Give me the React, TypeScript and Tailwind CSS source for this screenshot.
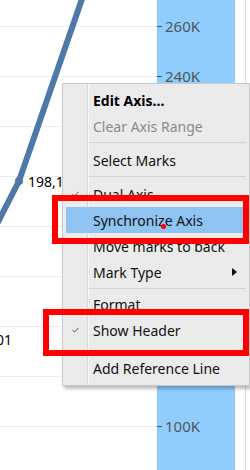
import React from 'react';

const axisTicks = ['260K', '240K', '220K', '200K', '180K', '160K', '140K', '120K', '100K'];

type Item = { label: string; kind?: 'bold' | 'disabled'; checked?: boolean; sub?: boolean; active?: boolean };

function Row({ item }: { item: Item }) {
  return (
    <div
      className={`relative flex h-[26px] items-center pl-[30px] pr-3 text-[14px] ${
        item.kind === 'bold' ? 'font-bold text-black' : item.kind === 'disabled' ? 'text-[#8a8a8a]' : 'text-[#111]'
      }`}
    >
      {item.active ? <div className="absolute inset-y-0 left-[3px] right-[3px] bg-[#8fc3f1]" /> : null}
      {item.checked ? (
        <svg className="absolute left-[9px] top-[10px]" width="7" height="6" viewBox="0 0 7 6">
          <path d="M0.5 3 L2.7 5 L6.5 0.8" fill="none" stroke="#555" strokeWidth="1" />
        </svg>
      ) : null}
      <span className="relative whitespace-nowrap">{item.label}</span>
      {item.sub ? (
        <svg className="absolute right-[12px] top-[9px]" width="5" height="8" viewBox="0 0 5 8">
          <path d="M0 0 L5 4 L0 8 Z" fill="#111" />
        </svg>
      ) : null}
    </div>
  );
}

function Sep() {
  return (
    <div className="flex h-[6px] items-center pl-[26px] pr-[3px]">
      <div className="h-px w-full bg-[#d4d4d4]" />
    </div>
  );
}

export default function App() {
  return (
    <div
      className="relative h-[470px] w-[250px] overflow-hidden bg-white"
      style={{ fontFamily: '"Noto Sans", "Open Sans", sans-serif' }}
    >
      <div className="flex h-full">
        {/* plot pane */}
        <div className="relative h-full w-[157px]">
          <div className="pt-[26px]">
            {axisTicks.map((t) => (
              <div key={t} className="h-[50px] border-t border-[#ececec]" />
            ))}
          </div>
          <svg className="absolute inset-0" width="157" height="470" viewBox="0 0 157 470">
            <polyline points="83,-4 19,181 -4,226" fill="none" stroke="#4e79a7" strokeWidth="6" strokeLinejoin="round" />
            <circle cx="19" cy="181" r="4" fill="#4e79a7" />
          </svg>
          <span className="absolute left-[28px] top-[171px] text-[14px] text-black">198,123</span>
          <span className="absolute left-[-4px] top-[329px] text-[14px] text-black">01</span>
        </div>
        {/* axis strip */}
        <div className="h-full w-[78px] bg-[#8fcdfe] pt-[26px]">
          {axisTicks.map((t) => (
            <div key={t} className="relative h-[50px]">
              <div className="absolute left-0 top-[-11px] flex h-[22px] items-center gap-[3px] text-[15px] text-[#555]">
                <span className="h-px w-[5px] bg-[#555]" />
                <span>{t}</span>
              </div>
            </div>
          ))}
        </div>
        <div className="w-[10px]" />
        <div className="h-full w-px bg-[#dcdcdc]" />
      </div>

      {/* context menu */}
      <div className="absolute left-[62px] top-[83px] w-[188px] border border-[#c9c9c9] bg-[#ebebeb] pb-[4px] pt-[3px] shadow-[2px_3px_3px_rgba(0,0,0,0.25)]">
        <div className="absolute inset-y-0 left-[24px] w-px bg-[#d8d8d8]" />
        <div className="absolute inset-y-0 left-[25px] w-px bg-[#f7f7f7]" />
        <Row item={{ label: 'Edit Axis...', kind: 'bold' }} />
        <Row item={{ label: 'Clear Axis Range', kind: 'disabled' }} />
        <Sep />
        <div className="h-[2px]" />
        <Row item={{ label: 'Select Marks' }} />
        <Sep />
        <div className="h-[2px]" />
        <Row item={{ label: 'Dual Axis', checked: true }} />
        <Row item={{ label: 'Synchronize Axis', active: true }} />
        <Row item={{ label: 'Move marks to back' }} />
        <Row item={{ label: 'Mark Type', sub: true }} />
        <Sep />
        <Row item={{ label: 'Format' }} />
        <Row item={{ label: 'Show Header', checked: true }} />
        <div className="h-[12px]" />
        <Row item={{ label: 'Add Reference Line' }} />
      </div>

      {/* annotation boxes */}
      <div className="absolute left-[52px] top-[195px] h-[49px] w-[197px] border-[6px] border-[#ff0000]" />
      <div className="absolute left-[43px] top-[309px] h-[47px] w-[206px] border-[6px] border-[#ff0000]" />
      <div className="absolute left-[161px] top-[224px] h-[5px] w-[5px] rounded-full bg-[#ff0000]" />
    </div>
  );
}
